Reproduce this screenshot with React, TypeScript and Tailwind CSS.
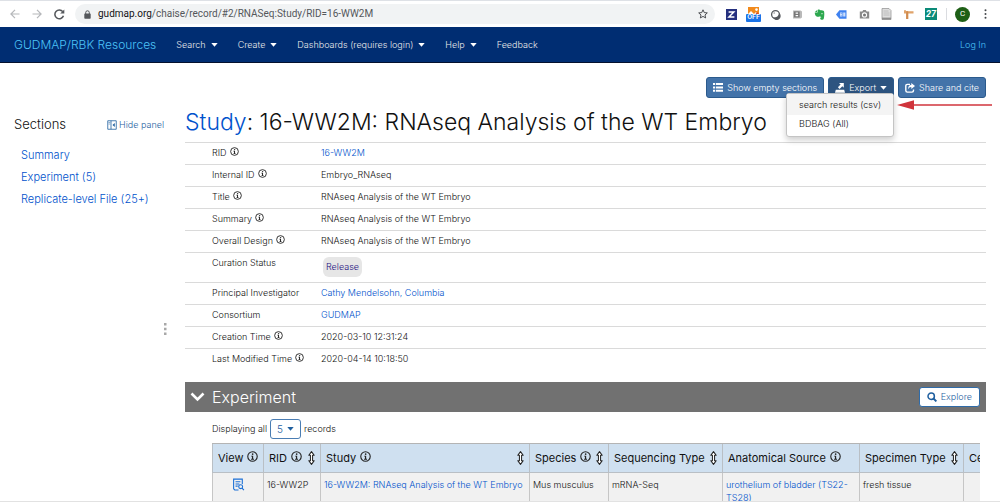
import type { ReactNode } from 'react';

function Caret({ className = '' }: { className?: string }) {
  return (
    <svg viewBox="0 0 8 5" aria-hidden="true" className={`h-[4px] w-[7px] shrink-0 ${className}`}>
      <path d="M0 0h8L4 4.6z" fill="currentColor" />
    </svg>
  );
}

function Info({ large = false }: { large?: boolean }) {
  return (
    <svg
      viewBox="0 0 20 20"
      role="img"
      aria-label="More information"
      className={large ? 'mb-[3px] size-[11px] shrink-0' : 'mb-[3px] size-[9px] shrink-0'}
    >
      <circle cx="10" cy="10" r="8.6" fill="none" stroke="#222" strokeWidth="2" />
      <circle cx="10.3" cy="5.8" r="1.5" fill="#222" />
      <path d="M7.6 8.6h3.6v5.6h1.6v1.5H7.4v-1.5H9v-4.1H7.6z" fill="#222" />
    </svg>
  );
}

function Sort() {
  return (
    <button type="button" aria-label="Sort" className="ml-auto shrink-0">
      <svg viewBox="0 0 12 26" className="h-[14px] w-[7px]" fill="#fff" stroke="#222" strokeWidth="1.9" strokeLinejoin="round">
        <path d="M6 1.2 11 8H8v10h3l-5 6.8L1 18h3V8H1z" />
      </svg>
    </button>
  );
}

function BrowserBar() {
  return (
    <div className="flex h-[27px] shrink-0 items-center border-t border-[#dee1e6] bg-white pr-[11px] pl-[10px]">
      <div className="flex items-center gap-[12px]">
        <button type="button" aria-label="Back" className="text-[#b5b7ba]">
          <svg viewBox="0 0 10 10" className="size-[10px]" fill="none" stroke="currentColor" strokeWidth="1.2">
            <path d="M9.5 5H1M5 .9.9 5 5 9.1" />
          </svg>
        </button>
        <button type="button" aria-label="Forward" className="text-[#b5b7ba]">
          <svg viewBox="0 0 10 10" className="size-[10px]" fill="none" stroke="currentColor" strokeWidth="1.2">
            <path d="M.5 5H9M5 .9 9.1 5 5 9.1" />
          </svg>
        </button>
        <button type="button" aria-label="Reload" className="text-[#55585c]">
          <svg viewBox="0 0 10 10" className="size-[11px]" fill="none" stroke="currentColor" strokeWidth="1.4">
            <path d="M8.6 6.2A4 4 0 1 1 8 2.4" />
            <path d="M9.4.4v3.8H5.6z" fill="currentColor" stroke="none" />
          </svg>
        </button>
      </div>
      <div className="ml-[10px] flex h-[20px] flex-1 items-center rounded-full bg-[#f1f3f4] pr-[7px] pl-[9px]">
        <svg viewBox="0 0 7 9" aria-hidden="true" className="h-[9px] w-[7px] text-[#55585c]">
          <path d="M1.7 4V2.6a1.8 1.8 0 0 1 3.6 0V4" fill="none" stroke="currentColor" strokeWidth="1" />
          <rect x=".3" y="3.4" width="6.4" height="5.3" rx=".7" fill="currentColor" />
        </svg>
        <p className="ml-[7px] flex-1 font-['Roboto'] text-[10px] leading-none font-normal text-[#54575b]">
          <span className="text-[#111215]">gudmap.org</span>/chaise/record/#2/RNASeq:Study/RID=16-WW2M
        </p>
        <button type="button" aria-label="Bookmark this page">
          <svg viewBox="0 0 20 20" className="size-[10px]" fill="none" stroke="#44474b" strokeWidth="1.9" strokeLinejoin="round">
            <path d="m10 1.6 2.5 5.6 6.1.6-4.6 4.1 1.3 6L10 14.8l-5.3 3.1 1.3-6-4.6-4.1 6.1-.6z" />
          </svg>
        </button>
      </div>
      <div className="ml-[11px] flex items-center gap-[11px]">
        <svg viewBox="0 0 11 11" aria-label="Zotero" className="size-[11px]">
          <rect width="11" height="11" fill="#25307f" />
          <path d="M2.600 3h5.200L3 8.100h5.400" fill="none" stroke="#fff" strokeWidth="1.5" />
        </svg>
        <div className="relative -mx-[2px] size-[15px]">
          <svg viewBox="0 0 15 15" aria-hidden="true" className="size-[15px]">
            <rect x="2" y="0" width="11" height="9" fill="#f18a1c" />
            <path d="m2 7 3-3 3 3 2-2 3 3v1H2z" fill="#fff" />
            <circle cx="10.5" cy="2.6" r="1.3" fill="#fff" />
            <path d="M8 9 11 5l2 2v2z" fill="#dc4b2c" />
          </svg>
          <span className="absolute inset-x-0 bottom-0 flex h-[8px] items-center justify-center rounded-[1px] bg-[#1a73e8] font-['Roboto'] text-[7px] leading-none font-medium text-white">
            OFF
          </span>
        </div>
        <svg viewBox="0 0 11 11" aria-label="Extension" className="size-[11px]">
          <circle cx="5.5" cy="5.5" r="3.900" fill="#fff" stroke="#55585c" strokeWidth="1.300" />
          <path d="M9.300 4A4 4 0 1 1 3 8.600a6 6 0 0 0 6.300-4.600z" fill="#55585c" />
          <circle cx="4.200" cy="3.900" r="1" fill="#bbb" />
        </svg>
        <svg viewBox="0 0 11 11" aria-label="Extension" className="size-[11px]">
          <path d="M1 1.500h7.500l1.500 1v6l-1.500 1H1z" fill="#b9b9b9" />
          <rect x="2" y="2.400" width="5.600" height="6" fill="#777" />
          <path d="M3.600 3.500h2.500v1.300H3.600zM3.600 6h2.500v1.300H3.600z" fill="#fff" />
        </svg>
        <svg viewBox="0 0 11 11" aria-label="Evernote" className="size-[11px]">
          <path d="M3.600 1c1-.8 2.400-.5 2.800.3 1.600.1 3.200.3 3.600 1 .5 1.500.4 4.800-.2 7.100-.3 1.200-1.300 1.400-2.400 1.300-1.100-.1-1.300-.8-1.200-1.600.1-.7.600-.9 1.400-.9-.5-.5-1.300-.3-1.800-1C5.300 8 3.200 8 1.900 6.900 1.100 6.200.7 4.600.8 3.600h2.400c.4 0 .5-.2.500-.5z" fill="#2da84f" />
          <path d="M.9 3 3.100.9v2z" fill="#2da84f" />
          <circle cx="8" cy="4.700" r=".6" fill="#fff" />
        </svg>
        <svg viewBox="0 0 12 11" aria-label="Extension" className="h-[11px] w-[12px]">
          <path d="M0 5.500 3.400 1.300h7.100v8.400H3.400z" fill="#3f82f0" />
          <path d="M4 3.400h2.500v4H4zM7.200 3.400h2.200v4H7.200z" fill="#cfe0fc" />
          <path d="M4.700 4.300h1v.8h-1zM4.700 5.900h1v.7h-1z" fill="#3f82f0" />
        </svg>
        <svg viewBox="0 0 11 11" aria-label="Camera" className="size-[11px]">
          <path d="M3.300 2.500 4.200 1h2.600l.9 1.500h2.500v7H.8v-7z" fill="#8a8a8a" />
          <circle cx="5.500" cy="5.900" r="2.600" fill="#fff" />
          <circle cx="5.500" cy="5.900" r="1.500" fill="#777" />
        </svg>
        <svg viewBox="0 0 11 12" aria-label="Document" className="h-[12px] w-[11px]">
          <path d="M1 .5h7l2 2v9H1z" fill="#dedede" stroke="#999" strokeWidth=".8" />
          <path d="M2.500 3h5M2.500 5h6M2.500 7h6" stroke="#b5b5b5" strokeWidth=".8" />
          <path d="M1 9.600h9v1.900H1z" fill="#8d8d8d" />
        </svg>
        <svg viewBox="0 0 11 11" aria-label="Extension" className="size-[11px]">
          <path d="M1 1.200h2v1h7.500v2.300H5.200V10H3.200V4.400H1z" fill="#e0a36a" />
          <path d="M3.200 2.200h2V10h-2z" fill="#d08b4f" />
        </svg>
        <span className="flex size-[12px] items-center justify-center bg-[#0b8a78] font-['Roboto'] text-[9px] leading-none font-bold text-white italic">
          27
        </span>
        <span className="-ml-[2px] h-[12px] w-px bg-[#dadce0]" />
        <span className="-ml-[3px] flex size-[15px] items-center justify-center rounded-full bg-[#1e5f16] font-['Roboto'] text-[8px] leading-none font-normal text-white">
          C
        </span>
        <button type="button" aria-label="Browser menu" className="flex w-[8px] justify-center">
          <svg viewBox="0 0 3 11" className="h-[10px] w-[3px]" fill="#44474b">
            <circle cx="1.500" cy="1.500" r="1.100" />
            <circle cx="1.500" cy="5.500" r="1.100" />
            <circle cx="1.500" cy="9.500" r="1.100" />
          </svg>
        </button>
      </div>
    </div>
  );
}

function NavBar() {
  const menus = ['Search', 'Create', 'Dashboards (requires login)', 'Help'];
  return (
    <nav className="flex h-[36px] shrink-0 items-center border-b border-[#05122e] bg-[#002d72] px-[14px] text-[9px] text-[#eaeaea]">
      <a href="#home" className="mr-[20px] text-[12px] text-[#4cc3f7]">
        GUDMAP/RBK Resources
      </a>
      <div className="flex items-center gap-[20px]">
        {menus.map((m) => (
          <button key={m} type="button" className="flex items-center gap-[5px]">
            {m}
            <Caret className="text-white" />
          </button>
        ))}
        <a href="#feedback">Feedback</a>
      </div>
      <a href="#login" className="ml-auto text-[#4cc3f7]">
        Log In
      </a>
    </nav>
  );
}

function Sidebar() {
  const links = ['Summary', 'Experiment (5)', 'Replicate-level File (25+)'];
  return (
    <aside className="w-[164px] shrink-0 pt-[52px] pl-[14px]">
      <div className="flex h-[20px] items-center justify-between">
        <h2 className="text-[13px] text-[#111]">Sections</h2>
        <button type="button" className="flex items-center gap-[2px] text-[9px] text-[#1f5f9f]">
          <svg viewBox="0 0 20 20" aria-hidden="true" className="size-[10px]" fill="none" stroke="currentColor" strokeWidth="1.600">
            <path d="M1.500 1.500h17v17h-17zM8 1.500v17" />
            <path d="M3 5h3.500M3 8h3.500" strokeWidth="1" />
            <path d="m15.500 6-4.500 4 4.500 4z" fill="currentColor" stroke="none" />
          </svg>
          Hide panel
        </button>
      </div>
      <ul className="mt-[9px] pl-[7px] text-[11px] text-[#0052cc]">
        {links.map((l) => (
          <li key={l} className="flex h-[22px] items-center whitespace-nowrap">
            <a href="#section">{l}</a>
          </li>
        ))}
      </ul>
    </aside>
  );
}

const actionClass =
  'flex h-[21px] items-center gap-[4px] rounded-[3px] border border-[#2b5a8c] px-[6px] text-[9px] whitespace-nowrap text-white';

function Actions() {
  return (
    <div className="flex justify-end gap-[4px]">
      <button type="button" className={`${actionClass} bg-[#4373a9]`}>
        <svg viewBox="0 0 10 9" aria-hidden="true" className="h-[9px] w-[10px]" fill="currentColor">
          <path d="M0 0h2.200v2H0zM3 0h7v2H3zM0 3.400h2.200v2H0zM3 3.400h7v2H3zM0 6.800h2.200v2H0zM3 6.800h7v2H3z" />
        </svg>
        Show empty sections
      </button>
      <div className="relative">
        <button type="button" aria-expanded="true" className={`${actionClass} bg-[#2d5480]`}>
          <svg viewBox="0 0 10 10" aria-hidden="true" className="size-[10px]" fill="currentColor">
            <path d="M4 0h4.800v4.800L7.300 3.300 4.600 6 2.900 4.300 5.600 1.600z" />
            <path d="M.8 6.800h8.400L10 9.800H0z" />
          </svg>
          Export
          <Caret />
        </button>
        <ul
          role="menu"
          className="absolute top-[16px] right-0 z-10 w-[108px] rounded-[3px] border border-[#c4c4c4] bg-white pb-[3px] text-[9px] text-[#111] shadow-[0_3px_6px_rgba(0,0,0,0.2)]"
        >
          <li role="menuitem" className="relative flex h-[21px] items-center bg-[#f4f4f4] pl-[12px]">
            search results (csv)
            <svg viewBox="0 0 95 10" aria-hidden="true" className="absolute left-[110px] h-[10px] w-[95px]">
              <path d="M0 5 17 .3v9.400z" fill="#d0343c" />
              <path d="M15 5h80" stroke="#d0343c" strokeWidth="1.500" />
            </svg>
          </li>
          <li role="menuitem" className="flex h-[18px] items-center pl-[12px]">
            BDBAG (All)
          </li>
        </ul>
      </div>
      <button type="button" className={`${actionClass} bg-[#4373a9]`}>
        <svg viewBox="0 0 10 10" aria-hidden="true" className="size-[10px]">
          <path d="M5 1.400H2.300Q.8 1.400.8 2.900v4.700q0 1.500 1.500 1.500H7q1.500 0 1.500-1.500V6.400" fill="none" stroke="currentColor" strokeWidth="1.400" />
          <path d="M6.300 0 10 3 6.300 6V4.100Q4 4 3.400 6.300 2.600 2 6.300 1.900z" fill="currentColor" />
        </svg>
        Share and cite
      </button>
    </div>
  );
}

const link = (t: string) => (
  <a href="#record" className="text-[#0052cc]">
    {t}
  </a>
);

const fields: { label: string; info?: boolean; value: ReactNode }[] = [
  { label: 'RID', info: true, value: link('16-WW2M') },
  { label: 'Internal ID', info: true, value: 'Embryo_RNAseq' },
  { label: 'Title', info: true, value: 'RNAseq Analysis of the WT Embryo' },
  { label: 'Summary', info: true, value: 'RNAseq Analysis of the WT Embryo' },
  { label: 'Overall Design', info: true, value: 'RNAseq Analysis of the WT Embryo' },
  {
    label: 'Curation Status',
    value: (
      <span className="ml-[2px] inline-flex h-[20px] items-center rounded-[6px] bg-[#e6e6e6] px-[3px] text-[#1c0f80]">
        Release
      </span>
    ),
  },
  { label: 'Principal Investigator', value: link('Cathy Mendelsohn, Columbia') },
  { label: 'Consortium', value: link('GUDMAP') },
  { label: 'Creation Time', info: true, value: '2020-03-10 12:31:24' },
  { label: 'Last Modified Time', info: true, value: '2020-04-14 10:18:50' },
];

function RecordTable() {
  return (
    <table className="w-full table-fixed border-separate border-spacing-0 text-[9px] leading-[12px] text-[#111]">
      <colgroup>
        <col className="w-[136px]" />
        <col />
      </colgroup>
      <tbody>
        {fields.map((f) => (
          <tr key={f.label} className="h-[22px]">
            <th scope="row" className="border-t border-[#dadada] pt-[4px] pl-[27px] text-left align-top font-light">
              <span className="flex items-center gap-[3px] whitespace-nowrap">
                {f.label}
                {f.info && <Info />}
              </span>
            </th>
            <td className="border-t border-[#dadada] pt-[4px] pb-[5px] align-top">
              {f.value}
            </td>
          </tr>
        ))}
      </tbody>
    </table>
  );
}

function ExperimentTable() {
  const heads = [
    { label: 'View', info: true, sort: false, width: 'w-[51px]' },
    { label: 'RID', info: true, sort: true, width: 'w-[57px]' },
    { label: 'Study', info: true, sort: true, width: 'w-[209px]' },
    { label: 'Species', info: true, sort: true, width: 'w-[79px]' },
    { label: 'Sequencing Type', info: false, sort: true, width: 'w-[114px]' },
    { label: 'Anatomical Source', info: true, sort: false, width: 'w-[137px]' },
    { label: 'Specimen Type', info: false, sort: true, width: 'w-[104px]' },
    { label: 'Ce', info: false, sort: false, width: 'w-[40px]' },
  ];
  const cell = 'border-l border-[#c6c6c6] px-[3px] pt-[5px] pb-[4px] align-top';
  return (
    <div className="mr-[6px] ml-[27px] overflow-hidden">
      <table className="w-[791px] table-fixed border-separate border-spacing-0 border-t border-[#b4b4b4] text-[9px] text-[#111]">
        <thead>
          <tr className="h-[29px] bg-[#cfe0f0]">
            {heads.map((h) => (
              <th key={h.label} scope="col" className={`border-b border-l border-[#b9bfc5] px-[5px] font-normal ${h.width}`}>
                <span className="flex items-center gap-[4px] text-[11px] whitespace-nowrap">
                  {h.label}
                  {h.info && <Info large />}
                  {h.sort && <Sort />}
                </span>
              </th>
            ))}
          </tr>
        </thead>
        <tbody>
          <tr className="bg-[#f1f1f1] leading-[13px]">
            <td className={cell}>
              <a href="#view" aria-label="View record" className="flex justify-center text-[#1a6fd6]">
                <svg viewBox="0 0 24 24" className="size-[13px]" fill="none" stroke="currentColor" strokeWidth="2">
                  <path d="M19 11V2H3v18l2 2h7M6.500 7h9M6.500 11h7M6.500 15h4" />
                  <circle cx="16" cy="16" r="3.600" />
                  <path d="m18.500 18.500 3.500 4" />
                </svg>
              </a>
            </td>
            <td className={cell}>16-WW2P</td>
            <td className={cell}>{link('16-WW2M: RNAseq Analysis of the WT Embryo')}</td>
            <td className={cell}>Mus musculus</td>
            <td className={cell}>mRNA-Seq</td>
            <td className={cell}>{link('urothelium of bladder (TS22-TS28)')}</td>
            <td className={cell}>fresh tissue</td>
            <td className={cell} />
          </tr>
        </tbody>
      </table>
    </div>
  );
}

export default function App() {
  return (
    <div className="flex h-screen flex-col overflow-hidden border-b border-[#e2e2e2] bg-white font-['Inter','Liberation_Sans',sans-serif] font-light">
      <BrowserBar />
      <NavBar />
      <div className="flex min-h-0 flex-1">
        <Sidebar />
        <div className="flex w-[21px] shrink-0 items-start pt-[260px]">
          <svg viewBox="0 0 3 12" aria-hidden="true" className="h-[12px] w-[3px]" fill="#a8a8a8">
            <path d="M0 0h2.500v2.500H0zM0 4.700h2.500v2.500H0zM0 9.400h2.500v2.500H0z" />
          </svg>
        </div>
        <main className="min-w-0 flex-1 overflow-hidden pt-[14px] pr-[14px]">
          <Actions />
          <h1 className="mt-[8px] mb-[4px] text-[23px] leading-[32px] whitespace-nowrap text-[#111]">
            <a href="#study" className="text-[#0052cc]">
              Study
            </a>
            : 16-WW2M: RNAseq Analysis of the WT Embryo
          </h1>
          <RecordTable />
          <section className="mt-[12px]">
            <div className="flex h-[30px] items-center bg-[#717171] pr-[6px] pl-[5px]">
              <svg viewBox="0 0 15 10" aria-hidden="true" className="h-[10px] w-[15px]">
                <path d="m1.500 1.500 6 6 6-6" fill="none" stroke="#fff" strokeWidth="2.600" />
              </svg>
              <h2 className="ml-[7px] text-[16px] text-white">Experiment</h2>
              <button
                type="button"
                className="ml-auto flex h-[20px] items-center gap-[4px] rounded-[3px] border border-[#2f6ba8] bg-white px-[7px] text-[9px] text-[#1f5f9f]"
              >
                <svg viewBox="0 0 10 10" aria-hidden="true" className="size-[10px]" fill="none" stroke="currentColor" strokeWidth="1.500">
                  <circle cx="4.200" cy="4.200" r="3.200" />
                  <path d="M6.500 6.500 9.400 9.400" strokeWidth="1.900" />
                </svg>
                Explore
              </button>
            </div>
            <div className="mt-[7px] mb-[4px] ml-[27px] flex h-[20px] items-center gap-[3px] text-[9px] text-[#111]">
              <label htmlFor="page-size">Displaying all</label>
              <span className="relative flex items-center text-[#1f5f9f]">
                <select
                  id="page-size"
                  defaultValue="5"
                  className="h-[20px] w-[31px] appearance-none rounded-[3px] border border-[#4a7db3] bg-white pl-[6px] text-[10px]"
                >
                  <option>5</option>
                  <option>10</option>
                  <option>25</option>
                </select>
                <Caret className="pointer-events-none absolute right-[7px]" />
              </span>
              <span>records</span>
            </div>
            <ExperimentTable />
          </section>
        </main>
      </div>
    </div>
  );
}
